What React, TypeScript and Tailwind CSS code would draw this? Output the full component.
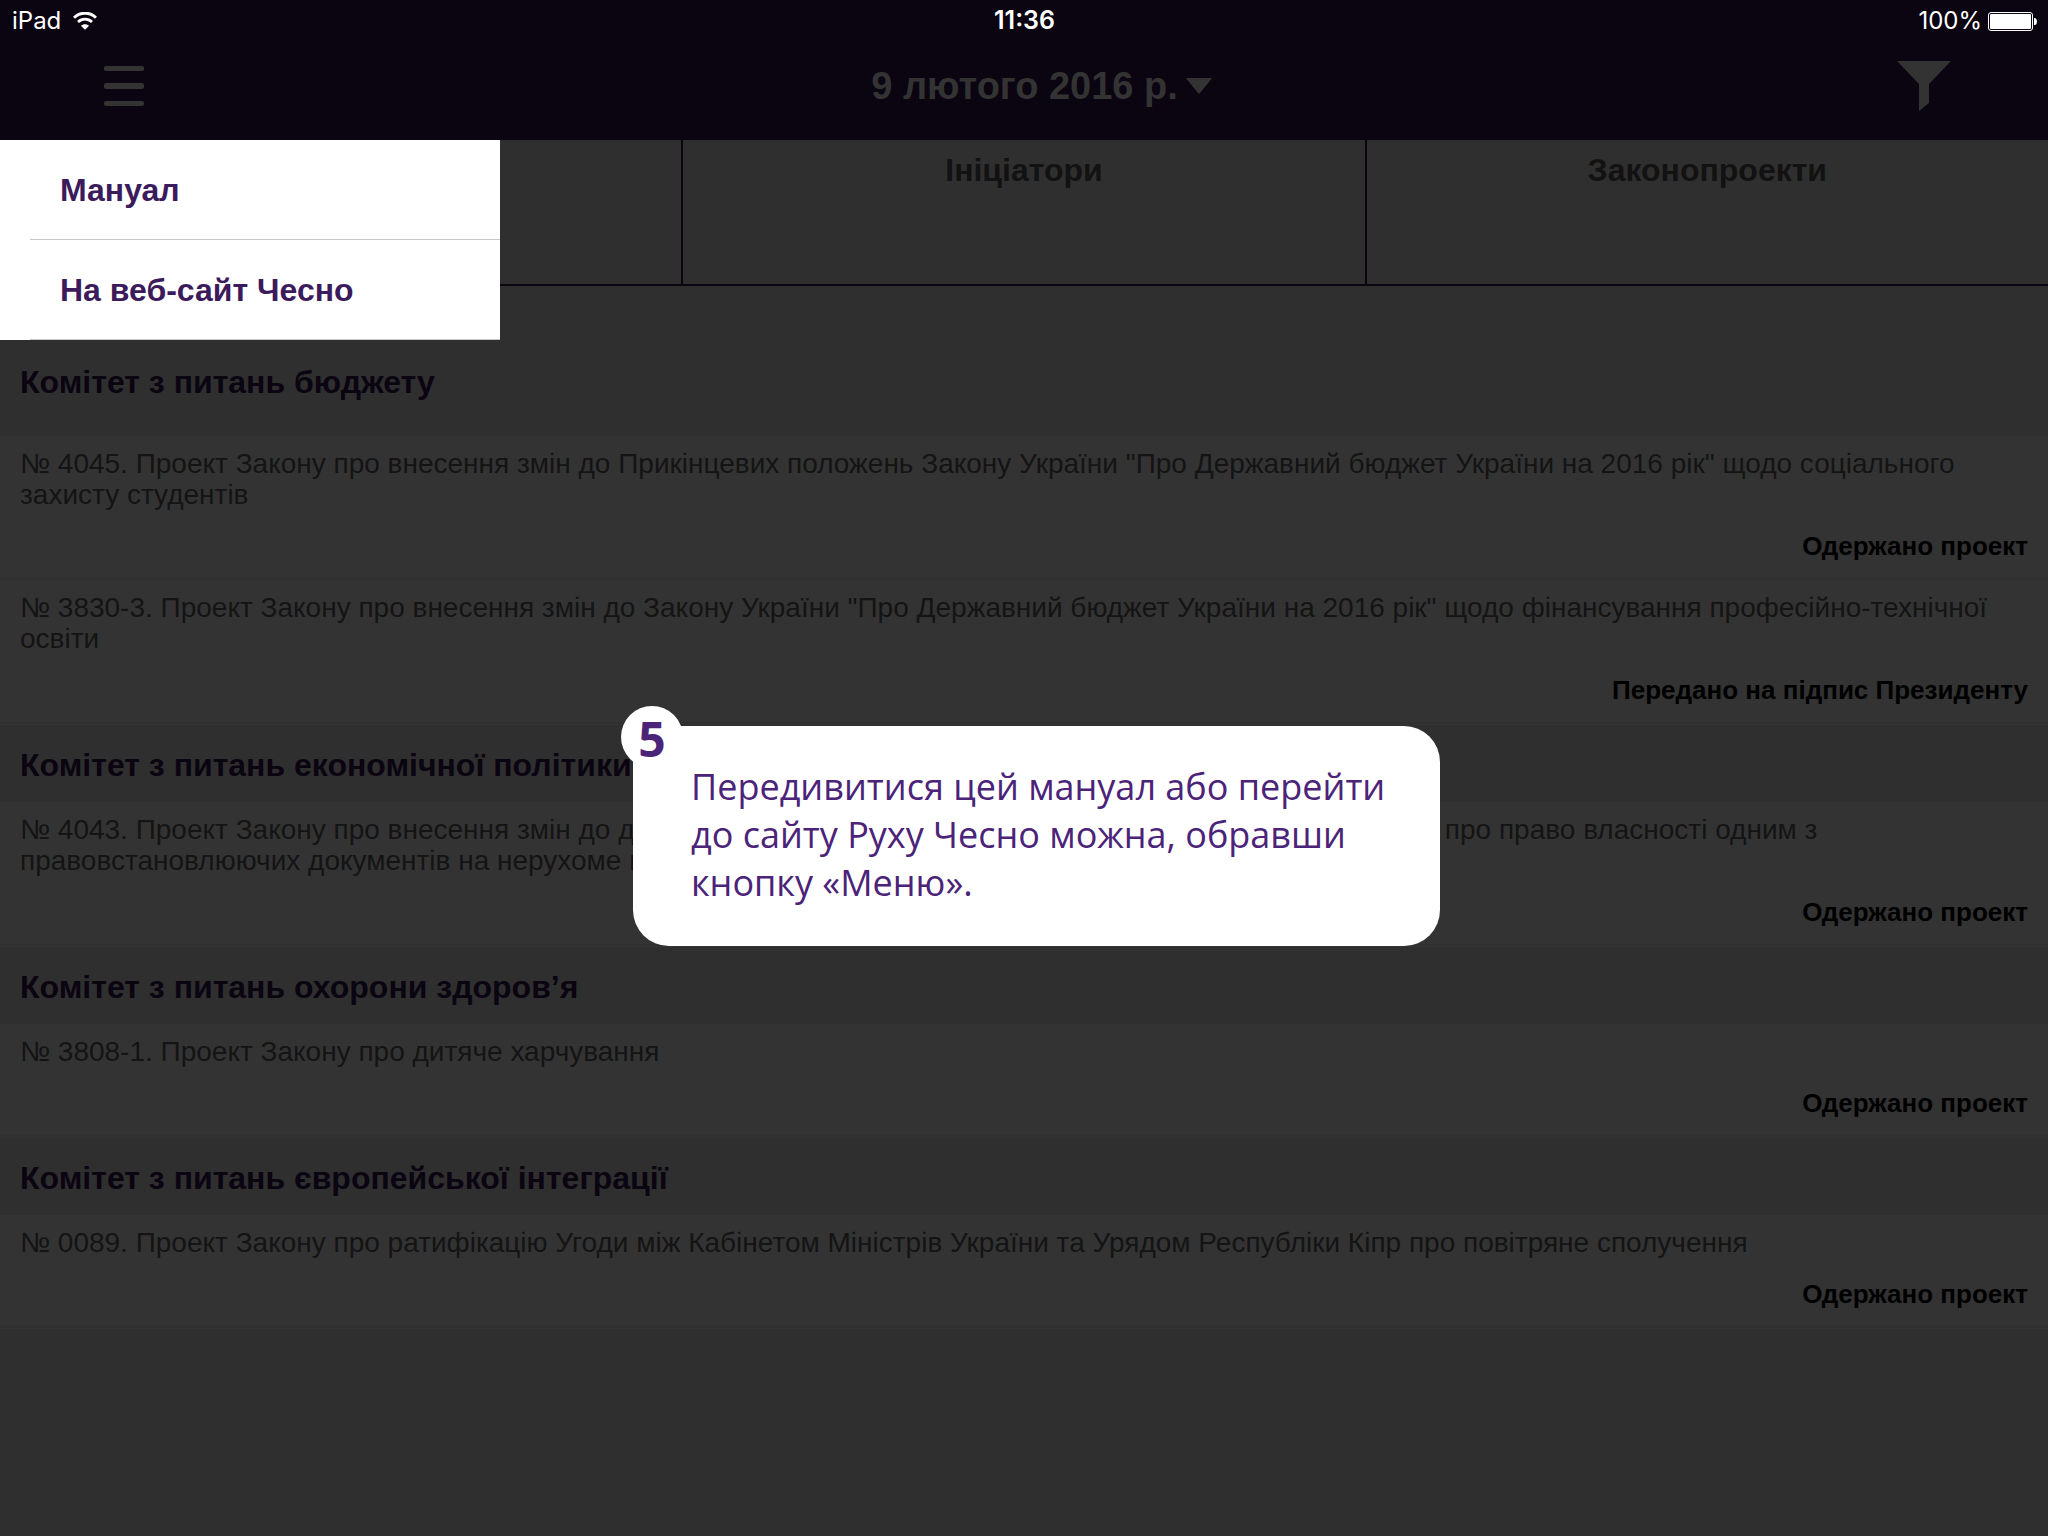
type Bill = { text: string; status: string };
type Committee = { title: string; bills: Bill[] };

const committees: Committee[] = [
  {
    title: 'Комітет з питань бюджету',
    bills: [
      {
        text: '№ 4045. Проект Закону про внесення змін до Прикінцевих положень Закону України "Про Державний бюджет України на 2016 рік" щодо соціального захисту студентів',
        status: 'Одержано проект',
      },
      {
        text: '№ 3830-3. Проект Закону про внесення змін до Закону України "Про Державний бюджет України на 2016 рік" щодо фінансування професійно-технічної освіти',
        status: 'Передано на підпис Президенту',
      },
    ],
  },
  {
    title: 'Комітет з питань економічної політики',
    bills: [
      {
        text: '№ 4043. Проект Закону про внесення змін до деяких законодавчих актів України щодо визначення свідоцтва про право власності одним з правовстановлюючих документів на нерухоме майно',
        status: 'Одержано проект',
      },
    ],
  },
  {
    title: 'Комітет з питань охорони здоров’я',
    bills: [{ text: '№ 3808-1. Проект Закону про дитяче харчування', status: 'Одержано проект' }],
  },
  {
    title: 'Комітет з питань європейської інтеграції',
    bills: [
      {
        text: '№ 0089. Проект Закону про ратифікацію Угоди між Кабінетом Міністрів України та Урядом Республіки Кіпр про повітряне сполучення',
        status: 'Одержано проект',
      },
    ],
  },
];

const tabs = ['Комітети', 'Ініціатори', 'Законопроекти'];
const menuItems = ['Мануал', 'На веб-сайт Чесно'];

function WifiIcon() {
  return (
    <svg className="h-[18px] w-6" viewBox="0 0 24 18" fill="none" aria-hidden="true">
      <path d="M1 5.8C7 -0.3 17 -0.3 23 5.8" stroke="#fff" strokeWidth="2.9" />
      <path d="M5 10C9 6.1 15 6.1 19 10" stroke="#fff" strokeWidth="2.7" />
      <path d="M12 17.8L7.9 13.7C10.2 11.6 13.8 11.6 16.1 13.7Z" fill="#fff" />
    </svg>
  );
}

function BatteryIcon() {
  return (
    <svg className="h-[19px] w-[49px]" viewBox="0 0 49 19" aria-hidden="true">
      <rect x="0.5" y="0.5" width="44" height="18" rx="2.5" fill="none" stroke="#fff" />
      <rect x="2" y="2" width="41" height="15" rx="1" fill="#fff" />
      <path d="M46 6H47.2Q49 7 49 9.5T47.2 13H46Z" fill="#fff" />
    </svg>
  );
}

function StatusBar() {
  return (
    <div className="grid h-[42px] grid-cols-3 items-center pl-3 pr-[11px] font-['Inter',sans-serif] text-2xl text-white">
      <div className="flex items-center gap-3">
        <span>iPad</span>
        <WifiIcon />
      </div>
      <span className="text-center text-[25px] font-semibold">11:36</span>
      <div className="flex items-center justify-end gap-1.5">
        <span>100%</span>
        <BatteryIcon />
      </div>
    </div>
  );
}

function NavBar() {
  return (
    <div className="flex h-[98px] items-start justify-between pl-[104px] pr-[97px]">
      <button type="button" aria-label="Меню" className="mt-6 w-[54px]">
        <svg className="h-10 w-10" viewBox="0 0 40 40" fill="#333" aria-hidden="true">
          <rect y="0" width="40" height="5" rx="2" />
          <rect y="17" width="40" height="6" rx="2" />
          <rect y="35" width="40" height="5" rx="2" />
        </svg>
      </button>
      <button
        type="button"
        className="mt-5 flex items-center gap-2 pl-7 text-[38px] leading-[48px] font-bold text-[#333]"
      >
        <span>9 лютого 2016 р.</span>
        <svg className="h-4 w-[26px]" viewBox="0 0 26 16" fill="#333" aria-hidden="true">
          <path d="M1 0H25Q26 0 25.4 1L14 15Q13 16 12 15L0.6 1Q0 0 1 0Z" />
        </svg>
      </button>
      <button type="button" aria-label="Фільтр" className="mt-[19px]">
        <svg className="h-[50px] w-[54px]" viewBox="0 0 54 50" fill="#333" aria-hidden="true">
          <path d="M0 0H54L32 23V42L22 50V23Z" />
        </svg>
      </button>
    </div>
  );
}

function BillRow({ bill }: { bill: Bill }) {
  return (
    <li className="flex flex-col border-b-2 border-[#303030] bg-[#333] px-5 pt-3 pb-[17px]">
      <p className="text-[28px] leading-[31px] text-[#141414]">{bill.text}</p>
      <p className="mt-[21px] text-right text-[26px] leading-[30px] font-bold text-black">{bill.status}</p>
    </li>
  );
}

export default function App() {
  return (
    <div className="relative flex min-h-screen flex-col bg-[#2f2f2f] font-['Liberation_Sans',Arial,sans-serif]">
      <header className="relative bg-[#0b0411]">
        <StatusBar />
        <NavBar />
        <nav className="absolute top-full left-0 z-10 w-[500px] bg-white">
          {menuItems.map((item) => (
            <a key={item} href="#" className="flex flex-col pl-[30px]">
              <span className="flex h-[100px] items-center border-b border-[#c8c7cc] pl-[30px] text-[32px] font-bold text-[#3b1b5b]">
                {item}
              </span>
            </a>
          ))}
        </nav>
      </header>

      <div role="tablist" className="grid h-[146px] grid-cols-3 gap-0.5 border-b-2 border-[#0b0411] bg-[#0b0411]">
        {tabs.map((tab) => (
          <button
            key={tab}
            type="button"
            role="tab"
            className="flex items-start justify-center bg-[#2f2f2f] pt-3 text-[32px] leading-9 font-bold text-[#121212]"
          >
            {tab}
          </button>
        ))}
      </div>

      <main className="pt-14">
        {committees.map((committee) => (
          <section key={committee.title} className="group">
            <h2 className="px-5 pt-[22px] pb-[19px] text-[32px] leading-9 font-bold text-[#0b0411] group-first:pb-9">
              {committee.title}
            </h2>
            <ul className="border-b border-[#333]">
              {committee.bills.map((bill) => (
                <BillRow key={bill.text} bill={bill} />
              ))}
            </ul>
          </section>
        ))}
      </main>

      <aside className="absolute top-[726px] left-[633px] z-20 w-[807px] rounded-[36px] bg-white pt-[37px] pr-10 pb-[39px] pl-[58px] font-['Open_Sans',sans-serif] text-[#4b2378]">
        <span className="absolute -top-5 -left-3 flex size-[62px] items-center justify-center rounded-full bg-white pt-1 text-5xl font-bold">
          5
        </span>
        <p className="text-4xl leading-[48px]">
          Передивитися цей мануал або перейти до сайту Руху Чесно можна, обравши кнопку «Меню».
        </p>
      </aside>
    </div>
  );
}
